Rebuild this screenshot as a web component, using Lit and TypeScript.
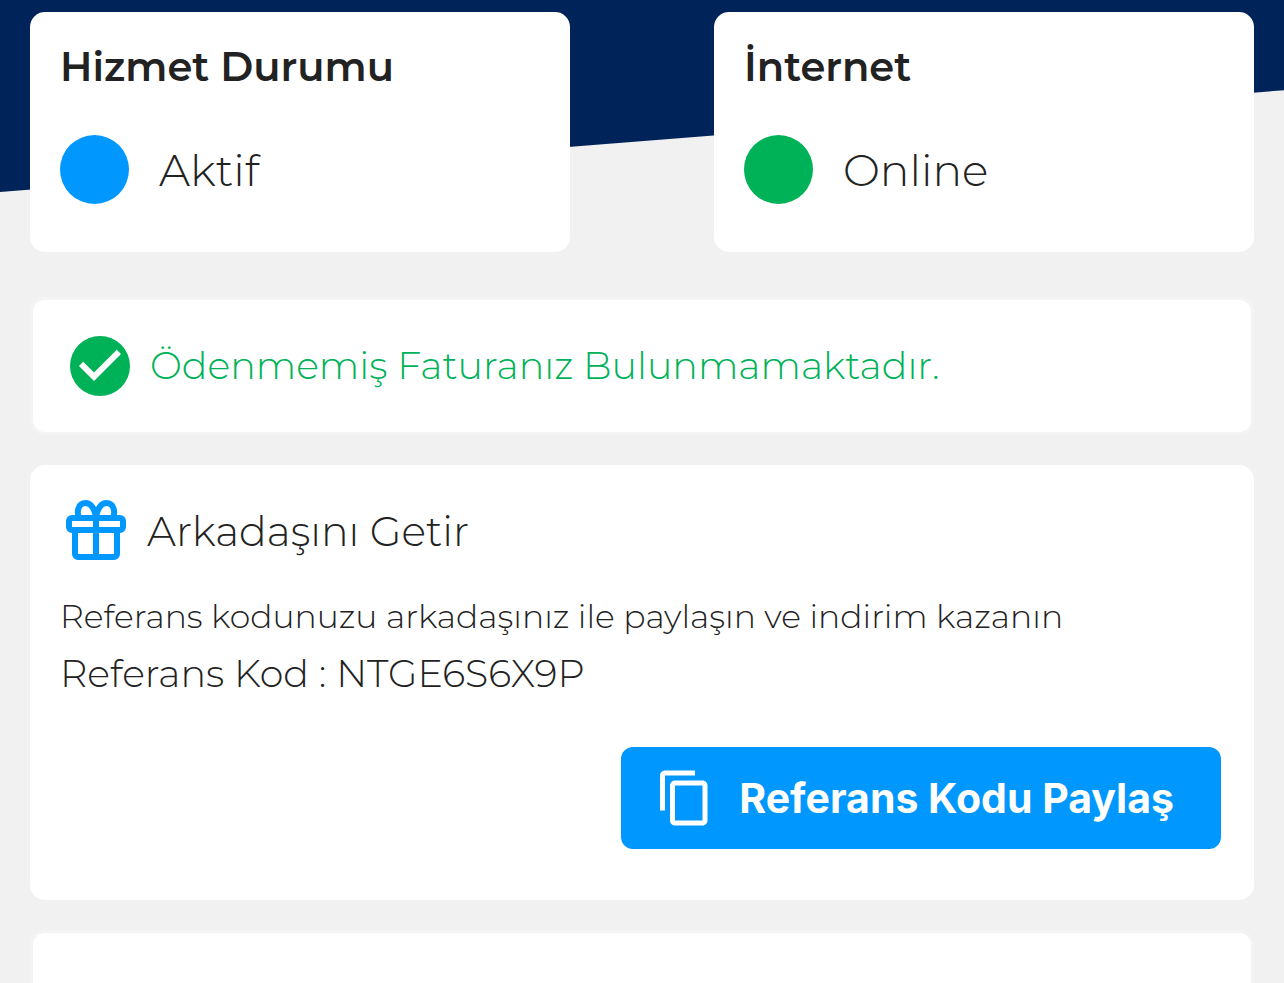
import { LitElement, html, css, svg } from "lit";
import { customElement, property } from "lit/decorators.js";

@customElement("status-card")
class StatusCard extends LitElement {
  @property() heading = "";
  @property() status = "";
  @property() tone = "blue";

  static styles = css`
    :host {
      display: block;
      box-sizing: border-box;
      padding: 30px 30px 48px;
      border-radius: 15px;
      background: #fff;
      color: #222;
    }
    .heading {
      margin: 0 0 43px;
      font-size: 40px;
      line-height: 50px;
      font-weight: 600;
    }
    .state {
      display: flex;
      align-items: center;
      gap: 30px;
      margin: 0;
      font-size: 44px;
      line-height: 50px;
      font-weight: 300;
    }
    .dot {
      flex: none;
      width: 69px;
      height: 69px;
      border-radius: 50%;
    }
    .blue {
      background: #0098ff;
    }
    .green {
      background: #00b257;
    }
  `;

  render() {
    return html`
      <h2 class="heading">${this.heading}</h2>
      <p class="state"><span class="dot ${this.tone}"></span>${this.status}</p>
    `;
  }
}

const checkIcon = svg`
  <circle cx="12" cy="12" r="10" fill="#00b257"/>
  <path d="M10 17l-5-5 1.41-1.41L10 14.17l7.59-7.59L19 8z" fill="#fff"/>`;

const giftIcon = svg`
  <g fill="none" stroke="#0098ff" stroke-width="2">
    <rect x="3" y="7.700" width="18" height="4" rx="1"/>
    <path d="M5 12v7.700a1 1 0 0 0 1 1h12a1 1 0 0 0 1-1V12M12 7v14"/>
    <path d="M6.400 8C5.300 5.300 6.300 2.700 8.500 2.700c2 0 3.300 2.400 3.500 5.100 .2-2.700 1.500-5.100 3.500-5.100 2.200 0 3.200 2.600 2.100 5.300"/>
  </g>`;

const copyIcon = svg`
  <path fill="#fff" d="M16 1H4c-1.100 0-2 .9-2 2v14h2V3h12V1zm3 4H8c-1.100 0-2 .9-2 2v14c0 1.100.9 2 2 2h11c1.100 0 2-.9 2-2V7c0-1.100-.9-2-2-2zm0 16H8V7h11v14z"/>`;

@customElement("app-root")
class AppRoot extends LitElement {
  static styles = css`
    :host {
      display: flex;
      flex-direction: column;
      gap: 30px;
      position: relative;
      isolation: isolate;
      box-sizing: border-box;
      min-height: 100vh;
      padding: 12px 30px 0;
      background: #f1f1f1;
      color: #222;
      font-family: Montserrat, Inter, sans-serif;
      font-weight: 300;
    }
    :host::before {
      content: "";
      position: absolute;
      z-index: -1;
      inset: 0 0 auto;
      height: 192px;
      background: #00245a;
      clip-path: polygon(0 0, 100% 0, 100% 47%, 0 100%);
    }
    .statuses {
      display: grid;
      grid-template-columns: 1fr 1fr;
      gap: 144px;
      margin-bottom: 15px;
    }
    .panel {
      border: 3px solid #f4f4f4;
      border-radius: 15px;
      background: #fff;
    }
    .invoice {
      display: flex;
      align-items: center;
      gap: 20px;
      padding: 36px 37px;
      color: #00b257;
    }
    .invoice-text {
      margin: 0;
      font-size: 38px;
      line-height: 50px;
    }
    .check {
      flex: none;
      width: 60px;
      height: 60px;
    }
    .refer {
      display: flex;
      flex-direction: column;
      padding: 30px 33px 51px 30px;
      border-radius: 15px;
      background: #fff;
    }
    .refer-head {
      display: flex;
      align-items: center;
      gap: 15px;
      margin-bottom: 20px;
    }
    .refer-title {
      margin: 0;
      font-size: 41px;
      line-height: 50px;
      font-weight: 300;
    }
    .gift {
      flex: none;
      width: 72px;
      height: 72px;
    }
    .note,
    .code {
      margin: 0;
      line-height: 58px;
    }
    .note {
      font-size: 33px;
    }
    .code {
      font-size: 38px;
    }
    .share {
      display: flex;
      align-items: center;
      align-self: flex-end;
      gap: 24px;
      margin-top: 44px;
      padding: 21px 47px 21px 34px;
      border: 0;
      border-radius: 12px;
      background: #0098ff;
      color: #fff;
      font-family: Inter, sans-serif;
      font-size: 41px;
      line-height: 50px;
      font-weight: 700;
      cursor: pointer;
    }
    .copy {
      flex: none;
      width: 60px;
      height: 60px;
    }
    .next {
      flex: 1;
      border-bottom: 0;
      border-radius: 15px 15px 0 0;
    }
  `;

  render() {
    return html`
      <div class="statuses">
        <status-card heading="Hizmet Durumu" status="Aktif" tone="blue"></status-card>
        <status-card heading="İnternet" status="Online" tone="green"></status-card>
      </div>
      <section class="panel invoice">
        <svg class="check" viewBox="2 2 20 20" aria-hidden="true">${checkIcon}</svg>
        <p class="invoice-text">Ödenmemiş Faturanız Bulunmamaktadır.</p>
      </section>
      <section class="refer">
        <div class="refer-head">
          <svg class="gift" viewBox="0 0 24 24" aria-hidden="true">${giftIcon}</svg>
          <h2 class="refer-title">Arkadaşını Getir</h2>
        </div>
        <p class="note">Referans kodunuzu arkadaşınız ile paylaşın ve indirim kazanın</p>
        <p class="code">Referans Kod : NTGE6S6X9P</p>
        <button class="share" type="button">
          <svg class="copy" viewBox="0 0 24 24" aria-hidden="true">${copyIcon}</svg>
          Referans Kodu Paylaş
        </button>
      </section>
      <section class="panel next"></section>
    `;
  }
}
